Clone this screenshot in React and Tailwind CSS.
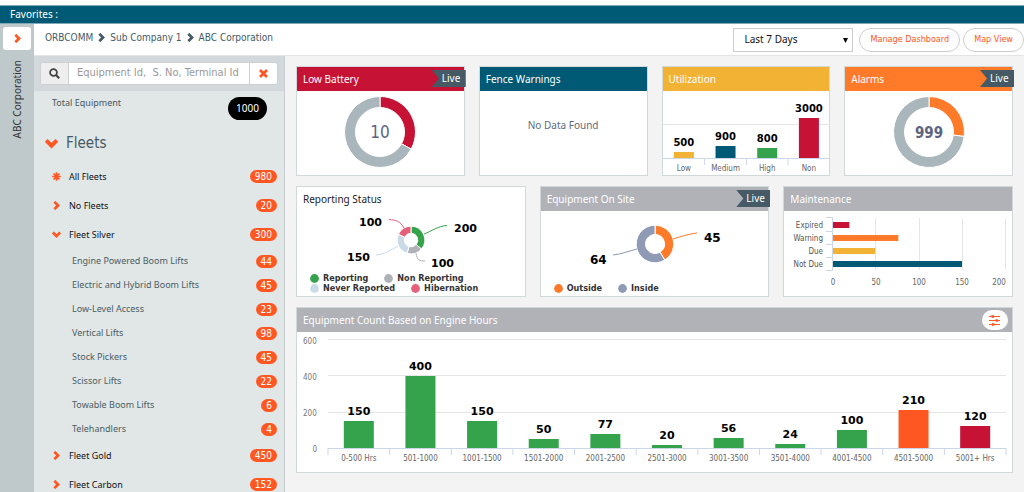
import React, { useState } from 'react';

const fleets = [
  { name: 'All Fleets', count: 980, icon: 'star' },
  { name: 'No Fleets', count: 20, icon: 'right' },
  {
    name: 'Fleet Silver',
    count: 300,
    icon: 'down',
    children: [
      { name: 'Engine Powered Boom Lifts', count: 44 },
      { name: 'Electric and Hybrid Boom Lifts', count: 45 },
      { name: 'Low-Level Access', count: 23 },
      { name: 'Vertical Lifts', count: 98 },
      { name: 'Stock Pickers', count: 45 },
      { name: 'Scissor Lifts', count: 22 },
      { name: 'Towable Boom Lifts', count: 6 },
      { name: 'Telehandlers', count: 4 },
    ],
  },
  { name: 'Fleet Gold', count: 450, icon: 'right' },
  { name: 'Fleet Carbon', count: 152, icon: 'right' },
];

const utilization = [
  { label: 'Low', value: 500, height: 6, color: '#f2b234' },
  { label: 'Medium', value: 900, height: 12, color: '#005a75' },
  { label: 'High', value: 800, height: 10, color: '#34a34b' },
  { label: 'Non', value: 3000, height: 40, color: '#c51235' },
];

const engineHours = [
  { label: '0-500 Hrs', value: 150, height: 27, color: '#34a34b' },
  { label: '501-1000', value: 400, height: 72, color: '#34a34b' },
  { label: '1001-1500', value: 150, height: 27, color: '#34a34b' },
  { label: '1501-2000', value: 50, height: 9, color: '#34a34b' },
  { label: '2001-2500', value: 77, height: 14, color: '#34a34b' },
  { label: '2501-3000', value: 20, height: 3, color: '#34a34b' },
  { label: '3001-3500', value: 56, height: 10, color: '#34a34b' },
  { label: '3501-4000', value: 24, height: 4, color: '#34a34b' },
  { label: '4001-4500', value: 100, height: 18, color: '#34a34b' },
  { label: '4501-5000', value: 210, height: 38, color: '#ff5722' },
  { label: '5001+ Hrs', value: 120, height: 22, color: '#c51235' },
];

const maintenance = [
  { label: 'Expired', value: 19, color: '#c51235' },
  { label: 'Warning', value: 76, color: '#ff7a29' },
  { label: 'Due', value: 49, color: '#f2b234' },
  { label: 'Not Due', value: 150, color: '#005a75' },
];

const Chevron = ({ down, className }) => (
  <svg viewBox="0 0 10 10" className={className} fill="none" stroke="currentColor" strokeWidth="3" aria-hidden="true">
    {down ? <path d="M0.9 2.6 L5 6.7 L9.1 2.6" /> : <path d="M2.6 0.9 L6.7 5 L2.6 9.1" />}
  </svg>
);

const Asterisk = ({ className }) => (
  <svg viewBox="0 0 10 10" className={className} stroke="currentColor" strokeWidth="1.8" aria-hidden="true">
    <path d="M5 0.3 V9.7 M0.3 5 H9.7 M1.7 1.7 L8.3 8.3 M8.3 1.7 L1.7 8.3" />
  </svg>
);

const Badge = ({ children }) => (
  <span className="ml-auto h-[13px] rounded-full bg-[#ff5722] px-[5px] font-['DejaVu_Sans_Condensed','Noto_Sans',sans-serif] text-[10px] leading-[13px] text-white">
    {children}
  </span>
);

const LiveTag = () => (
  <span className="absolute top-[3px] -right-[2px] h-[17px] w-[34px] bg-[#455a64] pl-[10px] text-[10px] leading-[17px] text-white [clip-path:polygon(0_0,100%_0,100%_100%,0_100%,7px_50%)]">
    Live
  </span>
);

const Card = ({ title, header, live, action, className, children }) => (
  <section className={`relative flex min-w-0 flex-col border border-[#d0d8da] bg-white ${className}`}>
    <header className={`flex h-6 shrink-0 items-center justify-between px-1.5 ${header}`}>
      <h2 className="text-[10px]">{title}</h2>
      {action}
    </header>
    {live && <LiveTag />}
    {children}
  </section>
);

// angles are in degrees, clockwise from twelve o'clock
const arcPath = (cx, cy, outer, inner, from, to) => {
  const point = (r, deg) => {
    const a = ((deg - 90) * Math.PI) / 180;
    return `${cx + r * Math.cos(a)} ${cy + r * Math.sin(a)}`;
  };
  const large = to - from > 180 ? 1 : 0;
  return `M${point(outer, from)} A${outer} ${outer} 0 ${large} 1 ${point(outer, to)} L${point(inner, to)} A${inner} ${inner} 0 ${large} 0 ${point(inner, from)} Z`;
};

const Ring = ({ cx, cy, outer, inner, slices }) => {
  const total = slices.reduce((sum, s) => sum + s.value, 0);
  let angle = 0;
  return slices.map((s) => {
    const from = angle;
    angle += (s.value / total) * 360;
    return (
      <path key={s.color} d={arcPath(cx, cy, outer, inner, from, angle)} fill={s.color} stroke="#fff" strokeWidth="1" />
    );
  });
};

const Gauge = ({ percent, color, label, labelClass }) => (
  <svg width="72" height="72" viewBox="0 0 72 72" className="mx-auto mt-[5px]" role="img">
    <Ring cx={36} cy={36} outer={35.5} inner={24.5} slices={[{ value: percent, color }, { value: 100 - percent, color: '#a9b7bc' }]} />
    <text x="36" y="42" textAnchor="middle" fill="#5c6580" className={labelClass}>
      {label}
    </text>
  </svg>
);

const ColumnChart = ({ data, height, base, barWidth, gridLines, valueClass, endTicks }) => (
  <svg width="100%" height={height} className="block overflow-visible font-['DejaVu_Sans_Condensed','Noto_Sans',sans-serif]" role="img">
    {gridLines.map((y) => (
      <line key={y} x1="0" x2="100%" y1={y + 0.5} y2={y + 0.5} stroke="#e6e6e6" />
    ))}
    <line x1="0" x2="100%" y1={base + 0.5} y2={base + 0.5} stroke="#ccd6eb" />
    {data.map((d, i) => {
      const center = `${((i + 0.5) / data.length) * 100}%`;
      const edge = `${(i / data.length) * 100}%`;
      return (
        <g key={d.label}>
          {(i > 0 || endTicks) && <line x1={edge} x2={edge} y1={base} y2={base + 7} stroke="#ccd6eb" />}
          <rect x={center} y={base - d.height} width={barWidth} height={d.height} fill={d.color} transform={`translate(${-barWidth / 2} 0)`} />
          <text x={center} y={base - d.height - 6} textAnchor="middle" className={valueClass}>
            {d.value}
          </text>
          <text x={center} y={base + 13} textAnchor="middle" fill="#666" className="text-[8px]">
            {d.label}
          </text>
        </g>
      );
    })}
    {endTicks && <line x1="100%" x2="100%" y1={base} y2={base + 7} stroke="#ccd6eb" />}
  </svg>
);

const Legend = ({ items }) => (
  <ul className="flex gap-4 font-['DejaVu_Sans_Condensed','Noto_Sans',sans-serif] text-[9px] leading-[10px] font-bold text-[#333]">
    {items.map((item) => (
      <li key={item.label} className="flex items-center gap-1">
        <svg width="9" height="9" viewBox="0 0 9 9" aria-hidden="true">
          <circle cx="4.5" cy="4.5" r="4.4" fill={item.color} />
        </svg>
        {item.label}
      </li>
    ))}
  </ul>
);

const ReportingChart = () => (
  <svg width="228" height="62" viewBox="0 0 228 62" className="mx-auto" role="img">
    <Ring
      cx={114}
      cy={29}
      outer={13.8}
      inner={6.8}
      slices={[
        { value: 200, color: '#34a34b' },
        { value: 100, color: '#b1b2b8' },
        { value: 150, color: '#c8dbe6' },
        { value: 100, color: '#e5607a' },
      ]}
    />
    <g fill="none" strokeWidth="1">
      <path d="M127 23 C135 20 141 15 150 14.5" stroke="#34a34b" />
      <path d="M119 42 C120 49 122 50 128 50" stroke="#b1b2b8" />
      <path d="M101 35 C93 40 87 43 79 44" stroke="#c8dbe6" />
      <path d="M107 17 C103 10 99 9 92 8.5" stroke="#e5607a" />
    </g>
    <g className="font-['DejaVu_Sans',sans-serif] text-[11px] font-bold">
      <text x="157" y="21">200</text>
      <text x="134" y="56">100</text>
      <text x="50" y="50">150</text>
      <text x="62" y="15">100</text>
    </g>
  </svg>
);

const OnSiteChart = () => (
  <svg width="228" height="62" viewBox="0 0 228 62" className="mx-auto" role="img">
    <Ring
      cx={114}
      cy={33}
      outer={18.8}
      inner={9.5}
      slices={[
        { value: 45, color: '#ff7a29' },
        { value: 64, color: '#8f9ab5' },
      ]}
    />
    <g fill="none" strokeWidth="1">
      <path d="M132 28 C141 25 148 23 156 22" stroke="#ff7a29" />
      <path d="M96 38 C88 40 81 43 72 44" stroke="#8f9ab5" />
    </g>
    <g className="font-['DejaVu_Sans',sans-serif] text-[12px] font-bold">
      <text x="163" y="31">45</text>
      <text x="49" y="53">64</text>
    </g>
  </svg>
);

const MaintenanceChart = () => (
  <svg width="228" height="82" viewBox="0 0 228 82" className="mx-auto font-['DejaVu_Sans_Condensed','Noto_Sans',sans-serif]" role="img">
    {[91, 135, 178, 221].map((x) => (
      <line key={x} x1={x + 0.5} x2={x + 0.5} y1="7" y2="59" stroke="#e6e6e6" />
    ))}
    {[6, 20, 33, 46, 59].map((y) => (
      <line key={y} x1="42" x2="49" y1={y + 0.5} y2={y + 0.5} stroke="#ccd6eb" />
    ))}
    <line x1="48.5" x2="48.5" y1="6" y2="60" stroke="#ccd6eb" />
    {maintenance.map((d, i) => (
      <g key={d.label}>
        <rect x="49" y={11 + i * 13} width={d.value * 0.86} height="6" fill={d.color} />
        <text x="39" y={17 + i * 13} textAnchor="end" fill="#555" className="text-[8px]">
          {d.label}
        </text>
      </g>
    ))}
    <g fill="#666" textAnchor="middle" className="text-[8px]">
      <text x="49" y="74">0</text>
      <text x="92" y="74">50</text>
      <text x="135" y="74">100</text>
      <text x="178" y="74">150</text>
      <text x="215" y="74">200</text>
    </g>
  </svg>
);

const Sidebar = () => (
  <aside className="flex w-[251px] shrink-0 flex-col border-r border-[#c5cdd0] bg-[#e1e6e7]">
    <div className="bg-[#d2d8dc] px-[6px] py-[6px]">
      <div className="flex h-[23px] overflow-hidden rounded-[3px] border border-[#ccd0d2] bg-white">
        <button type="button" aria-label="Search" className="flex w-7 shrink-0 items-center justify-center border-r border-[#ccd0d2] bg-[#eee] text-[#444]">
          <svg width="11" height="11" viewBox="0 0 11 11" fill="none" stroke="currentColor" strokeWidth="1.8" aria-hidden="true">
            <circle cx="4.5" cy="4.5" r="3.4" />
            <path d="M7 7 L10.2 10.2" strokeWidth="2.2" />
          </svg>
        </button>
        <input
          type="text"
          aria-label="Search equipment"
          placeholder="Equipment Id,  S. No, Terminal Id"
          className="min-w-0 flex-1 px-2 font-['DejaVu_Sans_Condensed','Noto_Sans',sans-serif] text-[11px] text-[#333] placeholder:text-[#999] focus:outline-none"
        />
        <button type="button" aria-label="Clear" className="flex w-7 shrink-0 items-center justify-center border-l border-[#ccd0d2] text-[#ff5722]">
          <svg width="9" height="9" viewBox="0 0 9 9" stroke="currentColor" strokeWidth="2.8" aria-hidden="true">
            <path d="M1 1 L8 8 M8 1 L1 8" />
          </svg>
        </button>
      </div>
    </div>
    <div className="flex items-start justify-between pt-[6px] pr-[17px] pb-[7px] pl-[18px]">
      <span className="text-[9px] leading-3 text-[#455a60]">Total Equipment</span>
      <span className="rounded-full bg-black px-2 text-[10px] leading-[23px] text-white">1000</span>
    </div>
    <div className="flex h-[35px] items-center gap-2 pb-[2px] pl-[11px]">
      <Chevron down className="h-[13px] w-[13px] text-[#ff5722]" />
      <h2 className="font-['DejaVu_Sans_Condensed','Noto_Sans',sans-serif] text-[15px] text-[#455a64]">Fleets</h2>
    </div>
    <ul className="min-h-0 flex-1 overflow-y-auto [scrollbar-width:none]">
      {fleets.map((fleet) => (
        <li key={fleet.name}>
          <a href="#" className="flex h-[29px] items-center gap-2 pr-[7px] pl-[18px] text-[9px] text-[#111]">
            {fleet.icon === 'star' ? (
              <Asterisk className="h-[9px] w-[9px] text-[#ff5722]" />
            ) : (
              <Chevron down={fleet.icon === 'down'} className="h-[9px] w-[9px] text-[#ff5722]" />
            )}
            {fleet.name}
            <Badge>{fleet.count}</Badge>
          </a>
          {fleet.children && (
            <ul>
              {fleet.children.map((child) => (
                <li key={child.name}>
                  <a href="#" className="flex h-6 items-center pr-[7px] pl-[38px] text-[9px] text-[#4a5e64]">
                    {child.name}
                    <Badge>{child.count}</Badge>
                  </a>
                </li>
              ))}
            </ul>
          )}
        </li>
      ))}
    </ul>
  </aside>
);

const App = () => {
  const [period, setPeriod] = useState('7');

  return (
    <div className="flex h-screen flex-col overflow-hidden bg-white font-['Noto_Sans',sans-serif]">
      <div className="mt-[5px] flex h-[19px] shrink-0 items-center border-y border-[#7fa9b7] bg-[#005a75] px-[10px] text-[10px] text-white">
        Favorites :
      </div>
      <div className="flex min-h-0 flex-1">
        <div className="flex w-[34px] shrink-0 flex-col items-center bg-[#bfc9cc] pt-[3px]">
          <button type="button" aria-label="Expand" className="flex h-[23px] w-7 items-center justify-center rounded-[3px] bg-white text-[#ff5722]">
            <Chevron className="h-[9px] w-[9px]" />
          </button>
          <span className="mt-[10px] rotate-180 text-[10px] text-[#333] [writing-mode:vertical-rl]">ABC Corporation</span>
        </div>
        <div className="flex min-w-0 flex-1 flex-col">
          <div className="flex h-8 shrink-0 items-center border-b border-[#e4e4e4] pl-[11px]">
            <nav className="flex flex-1 items-center gap-1 pb-1 font-['DejaVu_Sans_Condensed','Noto_Sans',sans-serif] text-[10px] text-[#455a64]">
              <a href="#">ORBCOMM</a>
              <Chevron className="h-[9px] w-[9px]" />
              <a href="#">Sub Company 1</a>
              <Chevron className="h-[9px] w-[9px]" />
              <a href="#">ABC Corporation</a>
            </nav>
            <div className="relative mr-1.5">
              <select
                aria-label="Period"
                value={period}
                onChange={(e) => setPeriod(e.target.value)}
                className="block h-6 w-[120px] appearance-none border border-[#ccc] bg-white px-[10px] text-[10px] text-[#111]"
              >
                <option value="7">Last 7 Days</option>
                <option value="30">Last 30 Days</option>
              </select>
              <svg width="5" height="5" viewBox="0 0 5 5" className="pointer-events-none absolute top-[10px] right-[5px]" aria-hidden="true">
                <path d="M0 0 H5 L2.5 5 Z" />
              </svg>
            </div>
            <button type="button" className="mr-[3px] h-6 rounded-full border border-[#ccc] px-[10px] font-['DejaVu_Sans_Condensed','Noto_Sans',sans-serif] text-[9px] text-[#ff5722]">
              Manage Dashboard
            </button>
            <button type="button" className="h-6 rounded-full border border-[#ccc] px-[10px] font-['DejaVu_Sans_Condensed','Noto_Sans',sans-serif] text-[9px] text-[#ff5722]">
              Map View
            </button>
          </div>
          <div className="flex min-h-0 flex-1">
            <Sidebar />
            <main className="flex min-w-0 flex-1 flex-col gap-[10px] bg-[#f3f3f3] py-[10px] pr-[11px] pl-[11px]">
              <div className="grid grid-cols-4 gap-[14px]">
                <Card title="Low Battery" header="bg-[#c51235] text-white" live className="h-[110px]">
                  <Gauge percent={33} color="#c51235" label="10" labelClass="font-['DejaVu_Sans_Condensed',sans-serif] text-[17px]" />
                </Card>
                <Card title="Fence Warnings" header="bg-[#005a75] text-white" className="h-[110px]">
                  <p className="mt-[27px] text-center text-[10px] text-[#5c6b80]">No Data Found</p>
                </Card>
                <Card title="Utilization" header="bg-[#f2b234] text-white" className="h-[110px]">
                  <ColumnChart data={utilization} height={84} base={67} barWidth={20} gridLines={[33]} valueClass="font-['DejaVu_Sans',sans-serif] text-[10px] font-bold" />
                </Card>
                <Card title="Alarms" header="bg-[#ff7a29] text-white" live className="h-[110px]">
                  <Gauge percent={27} color="#ff7a29" label="999" labelClass="font-['DejaVu_Sans_Condensed',sans-serif] text-[15px] font-bold" />
                </Card>
              </div>
              <div className="grid grid-cols-3 gap-[14px]">
                <Card title="Reporting Status" header="text-[#222]" className="h-[111px]">
                  <ReportingChart />
                  <div className="pl-[13px]">
                    <Legend
                      items={[
                        { label: 'Reporting', color: '#34a34b' },
                        { label: 'Non Reporting', color: '#b1b2b8' },
                      ]}
                    />
                    <Legend
                      items={[
                        { label: 'Never Reported', color: '#c8dbe6' },
                        { label: 'Hibernation', color: '#e5607a' },
                      ]}
                    />
                  </div>
                </Card>
                <Card title="Equipment On Site" header="bg-[#b1b2b8] text-white" live className="h-[111px]">
                  <OnSiteChart />
                  <div className="pt-[10px] pl-[13px]">
                    <Legend
                      items={[
                        { label: 'Outside', color: '#ff7a29' },
                        { label: 'Inside', color: '#8f9ab5' },
                      ]}
                    />
                  </div>
                </Card>
                <Card title="Maintenance" header="bg-[#b1b2b8] text-white" className="h-[111px]">
                  <MaintenanceChart />
                </Card>
              </div>
              <Card
                title="Equipment Count Based on Engine Hours"
                header="bg-[#b1b2b8] text-white"
                className="h-[166px]"
                action={
                  <button type="button" aria-label="Chart settings" className="-mr-0.5 flex h-5 w-[26px] items-center justify-center rounded-full bg-white text-[#ff5722]">
                    <svg width="12" height="11" viewBox="0 0 12 11" stroke="currentColor" aria-hidden="true">
                      <path d="M0 1.5 H11 M0 5.5 H11 M0 9.5 H11" strokeWidth="1" />
                      <path d="M2.5 1.5 H5 M6.5 5.5 H9 M3 9.5 H5.5" strokeWidth="2.6" />
                    </svg>
                  </button>
                }
              >
                <div className="flex px-1.5 pt-1">
                  <div className="flex w-[25px] flex-col gap-[26px] pt-px font-['DejaVu_Sans_Condensed','Noto_Sans',sans-serif] text-[8px] leading-[10px] text-[#777]">
                    <span>600</span>
                    <span>400</span>
                    <span>200</span>
                    <span className="w-[14px] text-right">0</span>
                  </div>
                  <div className="min-w-0 flex-1 pt-[3px]">
                    <ColumnChart data={engineHours} height={125} base={109} barWidth={30} gridLines={[0, 36, 73]} valueClass="font-['DejaVu_Sans',sans-serif] text-[11px] font-bold" endTicks />
                  </div>
                </div>
              </Card>
            </main>
          </div>
        </div>
      </div>
    </div>
  );
};

export default App;
